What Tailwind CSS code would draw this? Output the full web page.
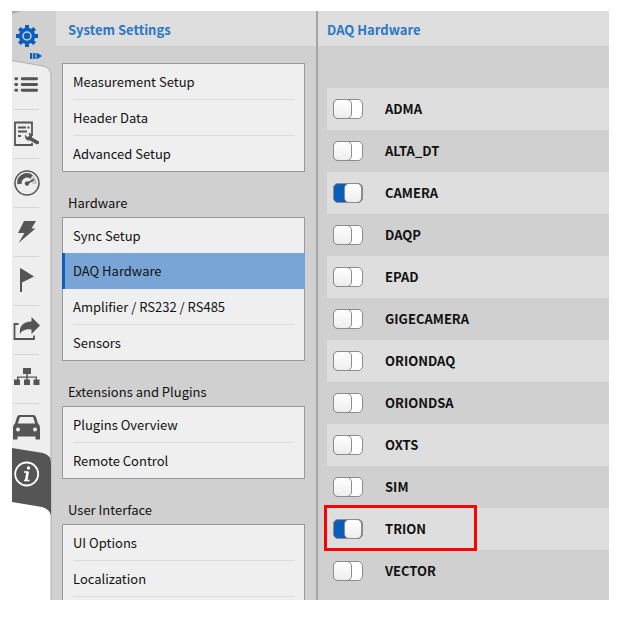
<!DOCTYPE html>
<html lang="en">
<head>
  <meta charset="UTF-8">
  <meta name="viewport" content="width=device-width, initial-scale=1.0">
  <title>System Settings</title>
  <script src="https://cdn.jsdelivr.net/npm/@tailwindcss/browser@4"></script>
</head>
<body class="bg-white font-['Noto_Sans_CJK_SC',sans-serif] text-[13px] text-[#111]">
  <div class="h-screen pt-[11px] pr-[10px] pb-[17px] pl-3">
    <div class="flex h-full overflow-hidden bg-[#d0d0d0]">

      <!-- Icon bar -->
      <nav class="relative w-11 shrink-0 text-[#555]">
        <svg class="absolute top-0 left-0 h-[589px] w-11" viewBox="0 0 44 589" fill="none">
          <path d="M0 480V590H39V480Z" fill="#fff"/>
          <path d="M0 50L31 55Q39 57 39 65V480H0Z" fill="#eee"/>
          <path d="M0 49.500L31 55Q39 57 39 65V589" stroke="#b0b0b0"/>
          <path d="M0 0H10Q5 1 0 3Z" fill="#aaa"/>
          <path d="M0 437L31 442Q39 444 39 452V504Q37 498 30 496L0 491Z" fill="#555"/>
        </svg>
        <div class="relative flex w-[30px] flex-col">
          <a href="#" aria-label="Settings" class="flex h-[50px] flex-col pt-3.5 text-[#0a5fbe]">
            <svg class="ml-1 h-[22px] w-[22px] shrink-0" viewBox="0 0 22 22" fill="none" stroke="currentColor">
              <circle cx="11" cy="11" r="6.500" stroke-width="3.600"/>
              <circle cx="11" cy="11" r="3.200" fill="currentColor" stroke="none"/>
              <path stroke-width="4" d="M11 0V4M11 18V22M0 11H4M18 11H22M3.400 3.400L6 6M16 16L18.600 18.600M3.400 18.600L6 16M16 6L18.600 3.400"/>
            </svg>
            <svg class="mt-1.5 h-1.5 w-3 shrink-0 self-end" viewBox="0 0 12 6" fill="currentColor">
              <path d="M0 0H2.300V6H0ZM3.200 0H5.500V6H3.200ZM6.500 0H7.500L12 3L7.500 6H6.500Z"/>
            </svg>
          </a>
          <a href="#" aria-label="Channel list" class="ml-0.5 flex h-[49px] w-[25px] items-center border-b border-[#d4d4d4]">
            <svg class="h-[26px] w-[26px]" viewBox="0 0 26 26" fill="none" stroke="currentColor" stroke-width="3" stroke-linecap="round">
              <path d="M1.800 6.500H2.800M8.500 6.500H23.500M1.800 12.500H2.800M8.500 12.500H23.500M1.800 18.500H2.800M8.500 18.500H23.500"/>
            </svg>
          </a>
          <a href="#" aria-label="Setup" class="ml-0.5 flex h-[49px] w-[25px] items-center border-b border-[#d4d4d4]">
            <svg class="h-[26px] w-[26px] shrink-0" viewBox="0 0 26 26" fill="none" stroke="currentColor">
              <path stroke-width="1.800" d="M18 15V1.500H1V24H18V22"/>
              <path stroke-width="1.800" d="M4 6.500H12M13.500 6.500H15.500M4 10.500H13M4 15H7"/>
              <path fill="currentColor" stroke="none" d="M11 13.500L13 16L15.500 15L14.500 12C17 12 18.500 14 18 16.500L25 20.500Q25.500 23.500 22.500 23.200L16 19.500C13 20 10.500 18 11 13.500Z"/>
            </svg>
          </a>
          <a href="#" aria-label="Gauge" class="ml-0.5 flex h-[49px] w-[25px] items-center border-b border-[#d4d4d4]">
            <svg class="h-[26px] w-[26px] shrink-0" viewBox="0 0 26 26" fill="none" stroke="currentColor">
              <circle cx="13" cy="13" r="12" stroke-width="1.500"/>
              <path stroke-width="4.500" d="M5.500 14A7.500 7.500 0 0 1 17.500 7"/>
              <path stroke="#c8c8c8" stroke-width="4.500" d="M18 7.500A7.500 7.500 0 0 1 20.500 14"/>
              <path stroke-width="2" d="M13 13.500L20 9.500"/>
              <circle cx="13" cy="13.500" r="2.200" fill="currentColor" stroke="none"/>
            </svg>
          </a>
          <a href="#" aria-label="Trigger" class="ml-0.5 flex h-[49px] w-[25px] items-center border-b border-[#d4d4d4]">
            <svg class="h-[26px] w-[26px] shrink-0" viewBox="0 0 26 26" fill="currentColor">
              <path d="M10 2H22L17.500 9.500H21.500L4.500 24L10.500 14H4Z"/>
            </svg>
          </a>
          <a href="#" aria-label="Events" class="ml-0.5 flex h-[49px] w-[25px] items-center border-b border-[#d4d4d4]">
            <svg class="h-[26px] w-[26px] shrink-0" viewBox="0 0 26 26" fill="currentColor">
              <path d="M6 0L8 1L20 8.500L8 14.500V24H6Z"/>
            </svg>
          </a>
          <a href="#" aria-label="Export" class="ml-0.5 flex h-[49px] w-[25px] items-center border-b border-[#d4d4d4]">
            <svg class="-ml-px h-[27px] w-[27px] shrink-0" viewBox="0 0 27 27" fill="none">
              <path stroke="currentColor" stroke-width="1.800" d="M5.500 7H1.500V22H21V18.500"/>
              <path fill="currentColor" d="M18.500 0L27 8.500L18.500 17V12.500Q10 11.500 7 17Q5.500 5 18.500 4.500Z"/>
            </svg>
          </a>
          <a href="#" aria-label="Topology" class="ml-0.5 flex h-[49px] w-[25px] items-center border-b border-[#d4d4d4]">
            <svg class="h-[26px] w-[26px] shrink-0" viewBox="0 0 26 26" fill="currentColor">
              <path d="M9 2H17V8H13.800V10.500H23V13.500H25.500V19H19.500V13.500H21.700V11.800H13.800V13.500H16V19H10V13.500H12.300V11.800H4.500V13.500H6V19H0V13.500H3V10.500H12.300V8H9Z"/>
            </svg>
          </a>
          <a href="#" aria-label="Vehicle" class="ml-0.5 flex h-11 w-[25px] items-center">
            <svg class="-ml-px h-[27px] w-[27px] shrink-0" viewBox="0 0 27 27" fill="currentColor" fill-rule="evenodd">
              <path d="M6.500 2H20.500Q22.300 2 23 4L25 10.500Q27 12 27 14.500V26.500H22.500V23.500H4.500V26.500H0V14.500Q0 12 2 10.500L4 4Q4.700 2 6.500 2ZM7 4L4.800 10.500H22.200L20 4ZM5 14.500A2 2 0 1 0 5 18.500A2 2 0 1 0 5 14.500ZM22 14.500A2 2 0 1 0 22 18.500A2 2 0 1 0 22 14.500Z"/>
            </svg>
          </a>
          <a href="#" aria-label="Info" class="ml-0.5 flex h-[52px] w-[25px] items-center text-white">
            <svg class="h-[26px] w-[26px] shrink-0" viewBox="0 0 26 26" fill="none" stroke="currentColor">
              <circle cx="12.700" cy="13" r="11.500" stroke-width="1.800"/>
              <circle cx="14.500" cy="7" r="1.700" fill="currentColor" stroke="none"/>
              <path stroke-width="1.300" d="M10 11H13.500M10 19.500H15.500"/>
              <path stroke-width="2.600" d="M13.700 10.500L12.200 19.500"/>
            </svg>
          </a>
        </div>
      </nav>

      <!-- Settings menu -->
      <section class="flex w-[260px] shrink-0 flex-col">
        <h2 class="h-[35px] shrink-0 bg-[#dedede] pl-3 leading-[37px] font-bold text-[#2b76c6]">System Settings</h2>
        <div class="pt-[17px] pr-[11px] pl-1.5">
          <ul class="border border-[#999] bg-[#efefef] px-2.5 leading-[35px]">
            <li class="border-b border-[#dcdcdc]"><a href="#" class="block">Measurement Setup</a></li>
            <li class="border-b border-[#dcdcdc]"><a href="#" class="block">Header Data</a></li>
            <li><a href="#" class="block">Advanced Setup</a></li>
          </ul>
          <h3 class="h-[45px] pt-[15px] pl-1.5 leading-8">Hardware</h3>
          <ul class="border border-[#999] bg-[#efefef] px-2.5 leading-[35px]">
            <li><a href="#" class="block">Sync Setup</a></li>
            <li class="-mx-[11px] border-l-[3px] border-[#0a5fbe] bg-[#79a5d6] pl-2 leading-9"><a href="#" class="block" aria-current="page">DAQ Hardware</a></li>
            <li class="border-b border-[#dcdcdc]"><a href="#" class="block">Amplifier / RS232 / RS485</a></li>
            <li><a href="#" class="block">Sensors</a></li>
          </ul>
          <h3 class="h-[45px] pt-[15px] pl-1.5 leading-8">Extensions and Plugins</h3>
          <ul class="border border-[#999] bg-[#efefef] px-2.5 leading-[35px]">
            <li class="border-b border-[#dcdcdc]"><a href="#" class="block">Plugins Overview</a></li>
            <li><a href="#" class="block">Remote Control</a></li>
          </ul>
          <h3 class="h-[45px] pt-[15px] pl-1.5 leading-8">User Interface</h3>
          <ul class="border border-[#999] bg-[#efefef] px-2.5 pb-9 leading-[35px]">
            <li class="border-b border-[#dcdcdc]"><a href="#" class="block">UI Options</a></li>
            <li class="border-b border-[#dcdcdc]"><a href="#" class="block">Localization</a></li>
          </ul>
        </div>
      </section>

      <!-- DAQ hardware -->
      <section class="flex min-w-0 grow flex-col border-l-2 border-[#a5a5a5]">
        <h2 class="h-[35px] shrink-0 bg-[#dedede] pl-[9px] leading-[37px] font-bold text-[#2b76c6]">DAQ Hardware</h2>
        <ul id="hardware" class="mt-[42px] ml-[9px] font-bold"></ul>
      </section>
    </div>
  </div>

<script>
const hardware = [
  { name: 'ADMA' },
  { name: 'ALTA_DT' },
  { name: 'CAMERA', on: true },
  { name: 'DAQP' },
  { name: 'EPAD' },
  { name: 'GIGECAMERA' },
  { name: 'ORIONDAQ' },
  { name: 'ORIONDSA' },
  { name: 'OXTS' },
  { name: 'SIM' },
  { name: 'TRION', on: true, marked: true },
  { name: 'VECTOR' }
];

document.getElementById('hardware').innerHTML = hardware.map(item => `
  <li class="relative h-[42px] odd:bg-[#dedede]">
    <label class="flex h-full items-center gap-[22px] pl-1.5">
      <input type="checkbox" ${item.on ? 'checked' : ''} class="flex h-5 w-[30px] shrink-0 appearance-none rounded-[5px] border border-[#8c8c8c] bg-white before:-my-px before:-ml-px before:w-[19px] before:rounded-[5px] before:border before:border-[#8c8c8c] before:bg-linear-to-b before:from-white before:to-[#eee] before:content-[''] checked:bg-[#0a5cb8] checked:before:ml-2.5">
      ${item.name}
    </label>
    ${item.marked ? '<div class="pointer-events-none absolute -top-[3px] -left-[3px] h-[46px] w-[153px] border-3 border-[#f00]"></div>' : ''}
  </li>`).join('');
</script>
</body>
</html>
